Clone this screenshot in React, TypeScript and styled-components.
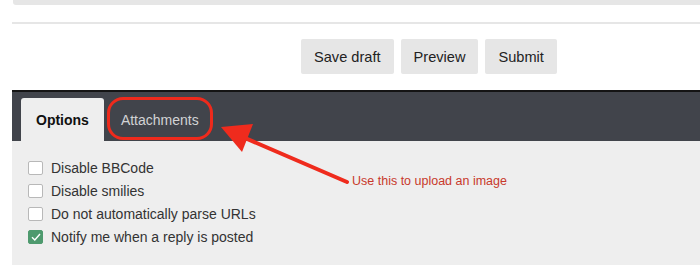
import styled, { createGlobalStyle } from "styled-components";

const Global = createGlobalStyle`
  body {
    margin: 0;
    background: #fff;
    font-family: "Liberation Sans", Arial, sans-serif;
  }
`;

const Page = styled.div`
  position: relative;
  width: 700px;
  height: 278px;
  overflow: hidden;
  padding-left: 12px;
  box-sizing: border-box;
`;

const TopBar = styled.div`
  margin-left: 1px;
  height: 5px;
  background: #e6e6e6;
  border-bottom-left-radius: 3px;
`;

const Divider = styled.div`
  margin-top: 17px;
  height: 2px;
  background: #e6e6e6;
`;

const ButtonRow = styled.div`
  display: flex;
  gap: 7px;
  margin-top: 15px;
  padding-left: 289px;
`;

const Button = styled.button`
  height: 35px;
  padding: 0 13px;
  border: none;
  border-radius: 2px;
  background: #e6e6e6;
  color: #222;
  font-family: "Liberation Sans", Arial, sans-serif;
  font-size: 14.6px;
`;

const Panel = styled.div`
  margin-top: 16px;
`;

const TabBar = styled.div`
  display: flex;
  align-items: flex-end;
  gap: 1px;
  height: 49px;
  padding-left: 9px;
  border-top: 2px solid #141414;
  background: #41444b;
`;

type TabProps = { $active?: boolean };
const Tab = styled.div<TabProps>`
  display: flex;
  align-items: center;
  height: 43px;
  padding: 0 ${(p) => (p.$active ? "15px" : "16px")};
  border-radius: 3px 3px 0 0;
  background: ${(p) => (p.$active ? "#eeeeee" : "transparent")};
  color: ${(p) => (p.$active ? "#111" : "#d2d3d5")};
  font-size: 14px;
  font-weight: ${(p) => (p.$active ? 700 : 400)};
`;

const Content = styled.div`
  height: 124px;
  box-sizing: border-box;
  padding: 15px 0 0 16px;
  background: #eeeeee;
`;

const Row = styled.label`
  display: flex;
  align-items: center;
  gap: 8px;
  height: 23px;
  color: #333;
  font-size: 14px;
`;

type BoxProps = { $checked?: boolean };
const Box = styled.span<BoxProps>`
  display: flex;
  align-items: center;
  justify-content: center;
  width: 15px;
  height: 14px;
  box-sizing: border-box;
  border: 1px solid ${(p) => (p.$checked ? "#4e9a6e" : "#b8b8b8")};
  border-radius: 2px;
  background: ${(p) => (p.$checked ? "#4e9a6e" : "#fff")};
`;

const Ring = styled.div`
  position: absolute;
  left: 107px;
  top: 97px;
  width: 106px;
  height: 43px;
  box-sizing: border-box;
  border: 3px solid #ee2a1c;
  border-radius: 16px;
`;

const ArrowSvg = styled.svg`
  position: absolute;
  left: 0;
  top: 0;
`;

const Note = styled.div`
  position: absolute;
  left: 352px;
  top: 174px;
  color: #c8392b;
  font-size: 12.5px;
`;

const options = [
  { label: "Disable BBCode", checked: false },
  { label: "Disable smilies", checked: false },
  { label: "Do not automatically parse URLs", checked: false },
  { label: "Notify me when a reply is posted", checked: true },
];

export default function App() {
  return (
    <Page>
      <Global />
      <TopBar />
      <Divider />
      <ButtonRow>
        <Button>Save draft</Button>
        <Button>Preview</Button>
        <Button>Submit</Button>
      </ButtonRow>
      <Panel>
        <TabBar>
          <Tab $active>Options</Tab>
          <Tab>Attachments</Tab>
        </TabBar>
        <Content>
          {options.map((o) => (
            <Row key={o.label}>
              <Box $checked={o.checked}>
                {o.checked && (
                  <svg width="10" height="8" viewBox="0 0 10 8">
                    <path d="M1 4.2 L3.8 7 L9 1" fill="none" stroke="#fff" strokeWidth="1.4" />
                  </svg>
                )}
              </Box>
              {o.label}
            </Row>
          ))}
        </Content>
      </Panel>
      <Ring />
      <ArrowSvg width="700" height="278" viewBox="0 0 700 278">
        <line x1="347" y1="182" x2="238" y2="135" stroke="#ef2b1d" strokeWidth="4" strokeLinecap="round" />
        <polygon points="221,127 253,124 242,152" fill="#ef2b1d" />
      </ArrowSvg>
      <Note>Use this to upload an image</Note>
    </Page>
  );
}
